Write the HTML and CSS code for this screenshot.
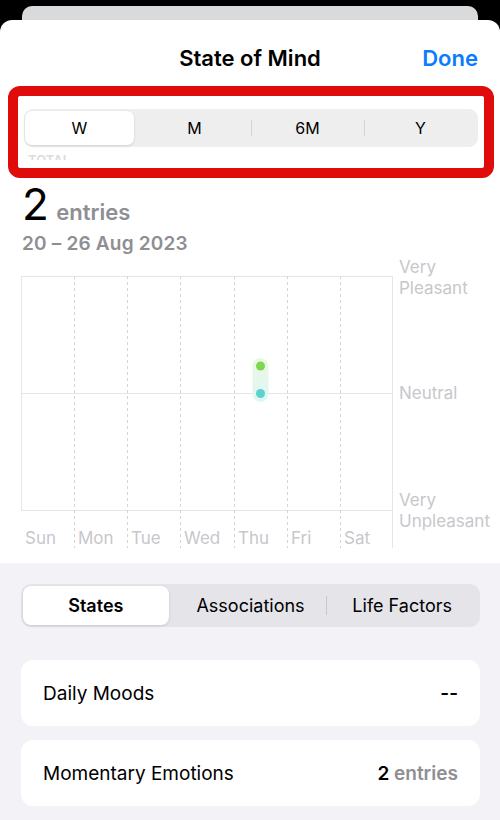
FILE: index.html
```html
<!DOCTYPE html>
<html lang="en">
<head>
    <meta charset="UTF-8">
    <meta name="viewport" content="width=device-width, initial-scale=1.0">
    <title>State of Mind</title>
    <link rel="stylesheet" href="styles.css">
</head>
<body>
    <div class="back-card"></div>

    <div class="sheet">
        <header class="sheet-header">
            <span></span>
            <h1>State of Mind</h1>
            <a href="#" class="done">Done</a>
        </header>

        <!-- highlighted range picker -->
        <div class="highlight">
            <div class="range-picker">
                <button class="range-btn selected">W</button>
                <button class="range-btn">M</button>
                <button class="range-btn sep">6M</button>
                <button class="range-btn sep">Y</button>
            </div>
            <div class="clipped-label">TOTAL</div>
        </div>

        <section class="summary">
            <p class="total"><span class="big">2</span> <span class="unit">entries</span></p>
            <p class="range">20 – 26 Aug 2023</p>
        </section>

        <svg class="chart" width="500" height="294" viewBox="0 0 500 294">
            <defs>
                <linearGradient id="capsule" x1="0" y1="0" x2="0" y2="1">
                    <stop offset="0" stop-color="#eaf7e2"/>
                    <stop offset="1" stop-color="#e0f6f6"/>
                </linearGradient>
            </defs>
            <g class="grid-solid">
                <line x1="21" y1="20.5" x2="392" y2="20.5"/>
                <line x1="21" y1="137.5" x2="392" y2="137.5"/>
                <line x1="21" y1="254.5" x2="392" y2="254.5"/>
                <line x1="21.5" y1="20" x2="21.5" y2="254"/>
                <line x1="392.5" y1="20" x2="392.5" y2="292"/>
            </g>
            <g class="grid-dash">
                <line x1="74.5" y1="20" x2="74.5" y2="292"/>
                <line x1="127.5" y1="20" x2="127.5" y2="292"/>
                <line x1="180.5" y1="20" x2="180.5" y2="292"/>
                <line x1="234.5" y1="20" x2="234.5" y2="292"/>
                <line x1="287.5" y1="20" x2="287.5" y2="292"/>
                <line x1="340.5" y1="20" x2="340.5" y2="292"/>
            </g>
            <rect x="252.5" y="102" width="16" height="44" rx="8" fill="url(#capsule)"/>
            <circle cx="260.5" cy="110" r="4.5" fill="#7fd651"/>
            <circle cx="260.5" cy="137.5" r="4.5" fill="#5cd2cf"/>
            <g class="axis-text">
                <text x="25" y="288">Sun</text>
                <text x="78" y="288">Mon</text>
                <text x="131" y="288">Tue</text>
                <text x="184" y="288">Wed</text>
                <text x="238" y="288">Thu</text>
                <text x="291" y="288">Fri</text>
                <text x="344" y="288">Sat</text>
                <text x="399" y="17">Very</text>
                <text x="399" y="38">Pleasant</text>
                <text x="399" y="143">Neutral</text>
                <text x="399" y="250">Very</text>
                <text x="399" y="271">Unpleasant</text>
            </g>
        </svg>

        <div class="details">
            <div class="tabs">
                <button class="tab selected">States</button>
                <button class="tab">Associations</button>
                <button class="tab sep">Life Factors</button>
            </div>

            <div class="row-card">
                <span>Daily Moods</span>
                <span class="value">--</span>
            </div>
            <div class="row-card">
                <span>Momentary Emotions</span>
                <span class="value">2 <span class="unit">entries</span></span>
            </div>
        </div>
    </div>
</body>
</html>
```

FILE: styles.css
```css
/* Reset */
* {
    margin: 0;
    padding: 0;
    box-sizing: border-box;
    font-family: 'Inter', 'Liberation Sans', sans-serif;
}

body {
    background: #000;
    width: 500px;
    height: 820px;
    overflow: hidden;
}

.back-card {
    height: 14px;
    margin: 6px 22px 0;
    background: #d9dadb;
    border-radius: 10px 10px 0 0;
}

.sheet {
    background: #fff;
    border-radius: 12px 12px 0 0;
    height: 800px;
    overflow: hidden;
}

/* Header */
.sheet-header {
    display: grid;
    grid-template-columns: 1fr auto 1fr;
    align-items: center;
    padding: 25px 22px 0;
    line-height: 26px;
}

.sheet-header h1 {
    font-size: 22px;
    font-weight: 600;
    color: #000;
}

.done {
    justify-self: end;
    font-size: 22px;
    font-weight: 600;
    color: #0a7cff;
    text-decoration: none;
}

/* Red highlight */
.highlight {
    margin: 15px 6px 0 8px;
    border: 10px solid #e00b0b;
    border-radius: 12px;
    padding: 13px 6px 0;
    height: 92px;
}

.range-picker {
    display: grid;
    grid-template-columns: repeat(4, 1fr);
    height: 38px;
    background: #eeeeef;
    border-radius: 9px;
    padding: 2px 1px;
}

.range-btn {
    position: relative;
    border: none;
    background: none;
    font-size: 16px;
    font-weight: 400;
    color: #000;
    border-radius: 7px;
}

.range-btn.selected {
    background: #fff;
    margin-right: 4px;
    box-shadow: 0 1px 3px rgba(0, 0, 0, 0.12);
}

.range-btn.sep::before {
    content: '';
    position: absolute;
    left: 0;
    top: 9px;
    bottom: 9px;
    width: 1px;
    background: #d5d5d8;
}

.clipped-label {
    height: 5px;
    overflow: hidden;
    margin: 8px 0 0 4px;
    font-size: 13px;
    line-height: 10px;
    font-weight: 600;
    color: #dcdcdf;
}

/* Summary */
.summary {
    padding: 4px 22px 0;
}

.total {
    line-height: 44px;
}

.total .big {
    font-size: 44px;
    font-weight: 400;
    color: #000;
}

.total .unit {
    margin-left: 3px;
    font-size: 22px;
    font-weight: 600;
    color: #8e8e93;
}

.range {
    margin-top: -3px;
    font-size: 19px;
    line-height: 22px;
    font-weight: 600;
    color: #8e8e93;
    letter-spacing: 0.2px;
}

/* Chart */
.chart {
    display: block;
    margin-top: 1px;
}

.grid-solid line {
    stroke: #e6e6e8;
    stroke-width: 1;
}

.grid-dash line {
    stroke: #d4d4d6;
    stroke-width: 1;
    stroke-dasharray: 3 3;
}

.axis-text text {
    font-size: 17px;
    fill: #c7c7cc;
}

/* Lower section */
.details {
    margin-top: 13px;
    background: #f2f2f7;
    padding: 21px 20px 0 21px;
    height: 300px;
}

.tabs {
    display: grid;
    grid-template-columns: repeat(3, 1fr);
    height: 43px;
    background: #e4e4e9;
    border-radius: 10px;
    padding: 2px;
}

.tab {
    position: relative;
    border: none;
    background: none;
    font-size: 18px;
    font-weight: 400;
    color: #000;
    border-radius: 8px;
}

.tab.selected {
    background: #fff;
    font-weight: 600;
    margin-right: 6px;
    box-shadow: 0 1px 3px rgba(0, 0, 0, 0.12);
}

.tab.sep::before {
    content: '';
    position: absolute;
    left: 0;
    top: 10px;
    bottom: 10px;
    width: 1px;
    background: #c8c8cd;
}

.row-card {
    display: flex;
    justify-content: space-between;
    align-items: center;
    height: 66px;
    margin-top: 14px;
    padding: 0 22px;
    background: #fff;
    border-radius: 12px;
    font-size: 19px;
    color: #000;
}

.tabs + .row-card {
    margin-top: 33px;
}

.row-card .value {
    font-weight: 600;
}

.row-card .unit {
    color: #8e8e93;
}
```
